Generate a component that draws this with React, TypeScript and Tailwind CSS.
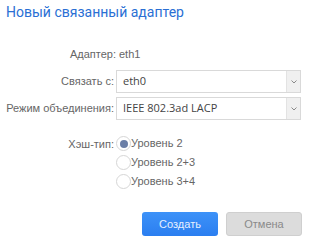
const Select = ({ value }: { value: string }) => (
  <div className="flex h-[23px] w-[185px] border border-[#d9d9d9] bg-white">
    <div className="flex flex-1 items-center pl-[6px] text-[11px] text-[#444] [font-family:'Open_Sans',sans-serif]">
      {value}
    </div>
    <div className="flex w-[14px] items-center justify-center border-l border-[#e3e3e3] bg-[#f0f0f0]">
      <svg width="6" height="4" viewBox="0 0 6 4">
        <path d="M0.5 0.5 L3 3 L5.5 0.5" fill="none" stroke="#8a8a8a" strokeWidth="1" />
      </svg>
    </div>
  </div>
);

const Radio = ({ label, checked }: { label: string; checked?: boolean }) => (
  <div className="flex h-[19px] items-center">
    <div className="flex h-[15px] w-[15px] items-center justify-center rounded-full border border-[#d6d6d6] bg-white">
      {checked && <div className="h-[8px] w-[8px] rounded-full bg-[#6a7ea6]" />}
    </div>
    <span className="text-[11px] text-[#666]">{label}</span>
  </div>
);

export default function App() {
  return (
    <div className="h-[243px] w-[311px] bg-white px-[6px] pt-[3px] [font-family:'Liberation_Sans',Arial,sans-serif]">
      <h1 className="text-[14px] leading-[18px] text-[#2a6fd4] [font-family:Roboto,sans-serif]">
        Новый связанный адаптер
      </h1>

      <div className="mt-[24px] flex flex-col text-[11px] text-[#666]">
        <div className="flex h-[18px] items-center">
          <span className="w-[110px] text-right">Адаптер:</span>
          <span className="ml-[3px]">eth1</span>
        </div>

        <div className="mt-[7px] flex items-center">
          <span className="w-[110px] pr-[2px] text-right">Связать с:</span>
          <Select value="eth0" />
        </div>
        <div className="mt-[4px] flex items-center">
          <span className="w-[110px] pr-[2px] text-right">Режим объединения:</span>
          <Select value="IEEE 802.3ad LACP" />
        </div>

        <div className="mt-[14px] flex">
          <span className="w-[110px] pr-[2px] pt-[2px] text-right">Хэш-тип:</span>
          <div className="flex flex-col">
            <Radio label="Уровень 2" checked />
            <Radio label="Уровень 2+3" />
            <Radio label="Уровень 3+4" />
          </div>
        </div>
      </div>

      <div className="mt-[21px] flex justify-end gap-[8px] pr-[3px]">
        <button className="h-[24px] w-[76px] rounded-[3px] bg-gradient-to-b from-[#3d92f8] to-[#2b7ef0] text-[11px] text-[#e6efff]">
          Создать
        </button>
        <button className="h-[24px] w-[76px] rounded-[3px] border border-[#cfcfcf] bg-[#dcdcdc] text-[11px] text-[#8a8a8a]">
          Отмена
        </button>
      </div>
    </div>
  );
}
